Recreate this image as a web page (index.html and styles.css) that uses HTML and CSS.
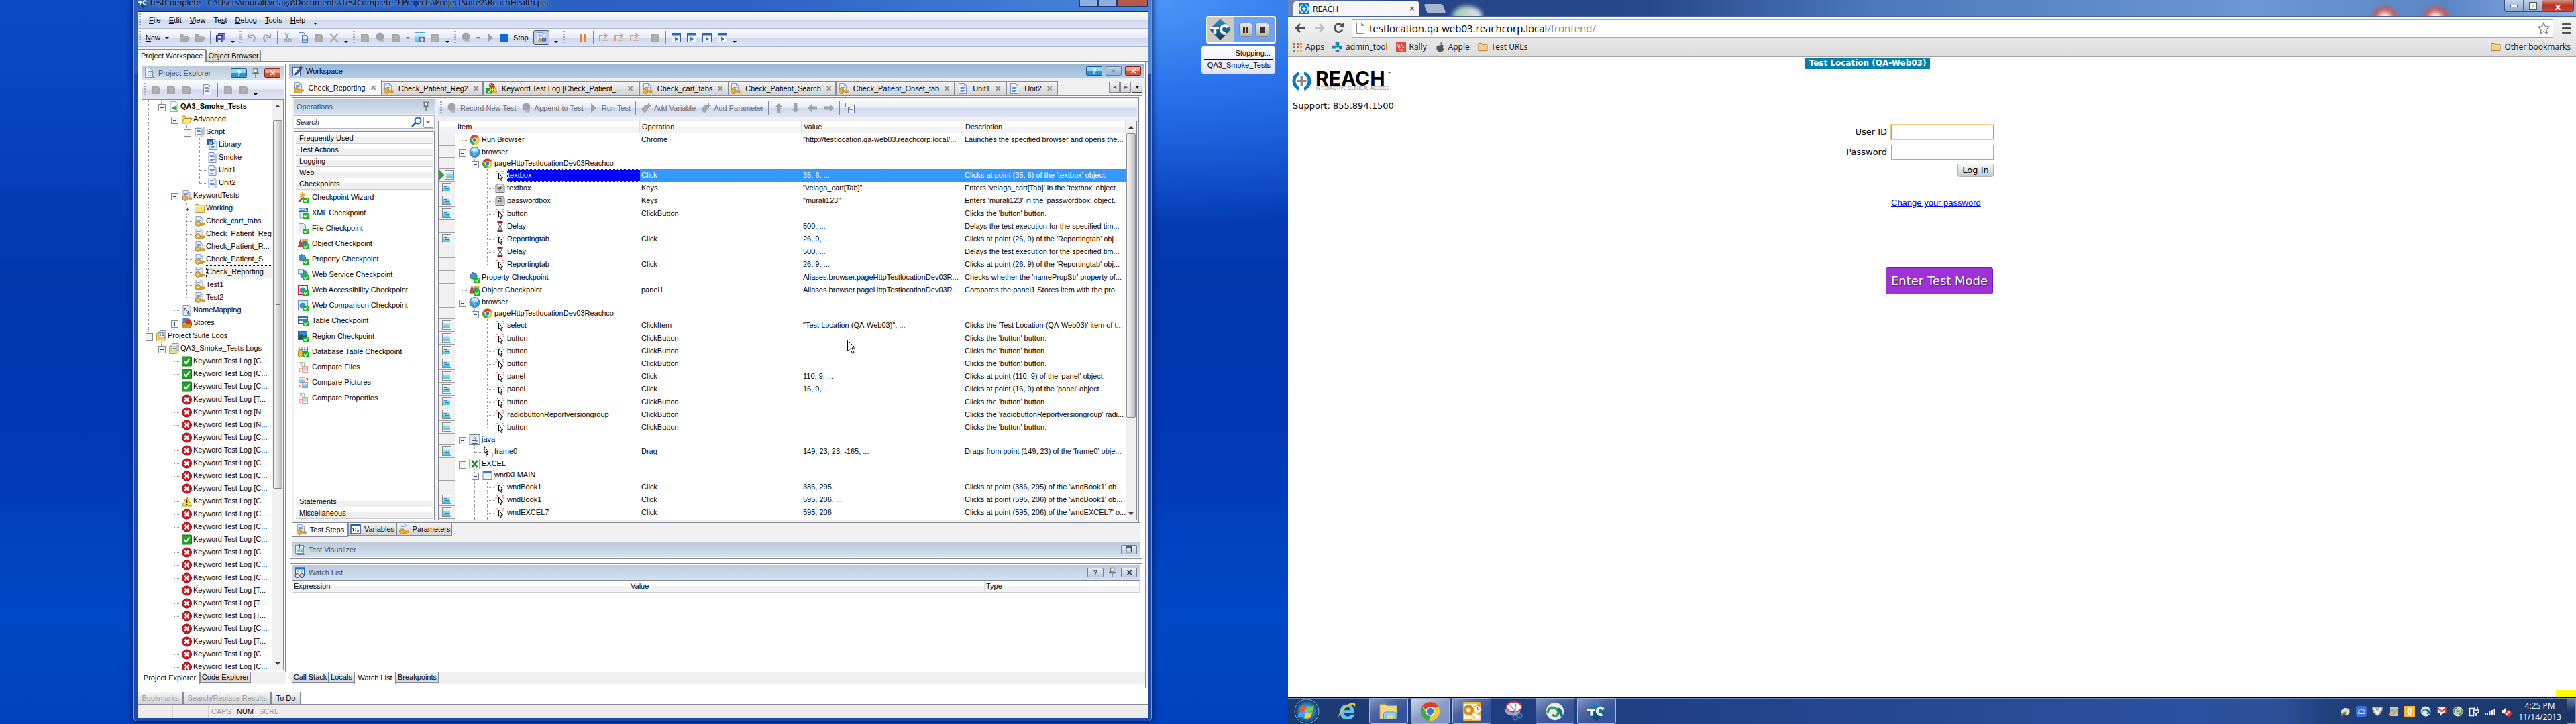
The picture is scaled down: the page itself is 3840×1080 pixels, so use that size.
FILE: index.html
```html
<!DOCTYPE html>
<html lang="en">
<head>
<meta charset="utf-8">
<title>Desktop</title>
<link rel="stylesheet" href="styles.css">
</head>
<body>
<svg class="defs" aria-hidden="true">
<defs>
<linearGradient id="gsky" x1="0" y1="0" x2="0" y2="1"><stop offset="0" stop-color="#fff"/><stop offset=".5" stop-color="#8fd4f4"/><stop offset="1" stop-color="#39c8f5"/></linearGradient>
<linearGradient id="gtc" x1="0" y1="0" x2="0" y2="1"><stop offset="0" stop-color="#2a8fd0"/><stop offset="1" stop-color="#0a3a60"/></linearGradient>
<radialGradient id="gorb"><stop offset="0" stop-color="#5fd0f0"/><stop offset=".7" stop-color="#1b6fae"/><stop offset="1" stop-color="#0d2f5c"/></radialGradient>
</defs>
<symbol id="doc" viewBox="0 0 16 16"><path d="M2.500 .5h8l3 3v12h-11z" fill="#eef3fc" stroke="#8094c4"/><path d="M10 1v3h3" fill="#8fb0e6"/><path d="M4.500 4.500h5M4.500 6.500h7M4.500 8.500h6M4.500 10.500h7M4.500 12.500h5" stroke="#6f8fcf"/></symbol>
<symbol id="lib" viewBox="0 0 16 16"><use href="#doc" x="1"/><rect width="9" height="9" fill="#1a5f9e"/><path d="M2 2l4.500 4.500M6.500 3v4h-4" stroke="#fff" fill="none"/></symbol>
<symbol id="docs" viewBox="0 0 16 16"><path d="M4.500 .5h9l1 1v11h-10z" fill="#dce6f8" stroke="#8094c4"/><path d="M1.500 2.500h9l1 1v12h-10z" fill="#eef3fc" stroke="#8094c4"/><path d="M3.500 5.500h5M3.500 7.500h6M3.500 9.500h5M3.500 11.500h6" stroke="#5f82c8"/></symbol>
<symbol id="key" viewBox="0 0 16 16"><path d="M2.500 .5h7l3 3v11h-10z" fill="#e6eefb" stroke="#8da0cc"/><path d="M9 1v3h3" fill="#7fa8e6"/><path d="M4 4.500h5M4 6.500h6" stroke="#7f9ad0"/><circle cx="5.500" cy="11.500" r="2.800" fill="none" stroke="#a87410" stroke-width="3"/><circle cx="5.500" cy="11.500" r="2.800" fill="none" stroke="#f0b428" stroke-width="1.600"/><path d="M8 11.500h8M12 12v3M14.500 12v2" stroke="#d9981a" stroke-width="2"/></symbol>
<symbol id="proj" viewBox="0 0 16 16"><path d="M2.500 .5h8l3 3v12h-11z" fill="#f5f7fa" stroke="#a0a8b4"/><path d="M12 6v8l-8-4z" fill="#35a04a"/></symbol>
<symbol id="fopen" viewBox="0 0 16 16"><path d="M1 14V3h5l1 1.500h6V7" fill="#f0cf58" stroke="#b9952c"/><path d="M1 14L4 6.500h12L12 14z" fill="#fbe58c" stroke="#b9952c"/></symbol>
<symbol id="fold" viewBox="0 0 16 16"><path d="M1 13.500V2.500h5l1 1.500h8v9.500z" fill="#f6dd7c" stroke="#c4a13a"/><path d="M1.500 5.500h13" stroke="#fff3bf"/></symbol>
<symbol id="logs" viewBox="0 0 16 16"><path d="M5.500 .5h9v10h-9z" fill="#dfe8f6" stroke="#8294b8"/><path d="M3.500 2.500h9v9h-9z" fill="#f4f8fe" stroke="#8294b8"/><path d="M1 4.500v11h11l3.500-4.500h-9l-2 1.500V4.500z" fill="#f9dd80" stroke="#c4a13a"/><path d="M6 5h1.500M6 7.500h1.500" stroke="#4a9a3a"/><path d="M8.500 5h3M8.500 7.500h3" stroke="#577"/></symbol>
<symbol id="nm" viewBox="0 0 16 16"><path d="M2.500 .5h8l3 3v12h-11z" fill="#dfe9fa" stroke="#7f9ad0"/><path d="M4 9l2-5 2 5M5 7.500h2.500M9.500 9.500v4.500h2v-2h-2M11 12v-2.500H9.500" stroke="#333" fill="none"/></symbol>
<symbol id="stores" viewBox="0 0 16 16"><rect x="2" y="1" width="8" height="7" fill="#3a86c8"/><circle cx="10.500" cy="6" r="4" fill="#d6322a"/><path d="M1 7l2 2h9l3-3v6l-3 3.500H1z" fill="#d9941f" stroke="#8a5a10"/></symbol>
<symbol id="ok" viewBox="0 0 16 16"><rect x="1" y="1" width="14" height="14" rx="1" fill="#22a324" stroke="#11791a"/><path d="M4 8l3 3.500L12 4" stroke="#fff" stroke-width="2" fill="none"/></symbol>
<symbol id="err" viewBox="0 0 16 16"><circle cx="8" cy="8" r="7" fill="#cf1820" stroke="#8e0d14"/><path d="M5 5l6 6M11 5l-6 6" stroke="#fff" stroke-width="2.500"/></symbol>
<symbol id="warn" viewBox="0 0 16 16"><path d="M8 1l7.500 14H.5z" fill="#ffe12a" stroke="#b79a00"/><path d="M8 5.500v5M8 12v2" stroke="#222" stroke-width="1.600"/></symbol>
<symbol id="chrome" viewBox="0 0 16 16"><circle cx="8" cy="8" r="7.500" fill="#f7c92b"/><path d="M8 .5a7.500 7.500 0 0 1 6.600 4H8a3.500 3.500 0 0 0-3.200 2L1.500 4.300A7.500 7.500 0 0 1 8 .5z" fill="#dc3b2c"/><path d="M1.500 4.300l3.500 5.200a3.500 3.500 0 0 0 3.500 2L7 15.500A7.500 7.500 0 0 1 1.500 4.300z" fill="#3fa64a"/><circle cx="8" cy="8" r="3.600" fill="#fff"/><circle cx="8" cy="8" r="2.800" fill="#3a7bd0"/></symbol>
<symbol id="globe" viewBox="0 0 16 16"><circle cx="8" cy="8" r="7.500" fill="#3a9ade" stroke="#2a76b0"/><ellipse cx="8" cy="5" rx="5.500" ry="3.500" fill="#c4e8fa"/><path d="M3.500 6.500h9L8 13z" fill="#8accf2"/><path d="M5 6.500l3 4 3-4" stroke="#2a84c8" fill="none"/></symbol>
<symbol id="click" viewBox="0 0 16 16"><path d="M3 5H1M5 3L3 1M8 3V0M11 3l2-2M12 5h2" stroke="#f02020" fill="none"/><path d="M6 4v9l2-1.500L9.500 15.500l1.500-1L9.500 11H12z" fill="#fff" stroke="#000"/></symbol>
<symbol id="ak" viewBox="0 0 16 16"><path d="M1.500 11V4q0-2.500 2.500-2.500h8q2.500 0 2.500 2.500v10.500h-13z" fill="#d4d4d4" stroke="#777"/><rect x="3.500" y="2" width="9" height="9" rx="1" fill="#f6f6f6" stroke="#999"/><path d="M6 4.500h3.500V9H6V6.700h3.500" stroke="#333" fill="none"/></symbol>
<symbol id="glass" viewBox="0 0 16 16"><path d="M4 1.500h8M4 14.500h8" stroke="#9c1414" stroke-width="3"/><path d="M5 3h6l-2.300 5L11 13H5l2.300-5z" fill="#e6e6e6" stroke="#666"/></symbol>
<symbol id="ck" viewBox="0 0 16 16"><rect x="7" y="8" width="9" height="8" fill="#12bb18"/><path d="M9 11.500l2 2.500 3.500-4" stroke="#fff" stroke-width="1.500" fill="none"/></symbol>
<symbol id="pchk" viewBox="0 0 16 16"><path d="M1 4l4-3.500 5 1.500 2 4-4 4.500-5-1z" fill="#3d92cf" stroke="#22689c"/><use href="#ck"/></symbol>
<symbol id="ochk" viewBox="0 0 16 16"><path d="M.5 12L4 1.500l3 10.500z" fill="#d84a48" stroke="#a02c2c"/><rect x="6" y="1" width="9" height="7" fill="#e9b02c"/><circle cx="10" cy="8" r="4.500" fill="#2d7fd0"/><use href="#ck"/></symbol>
<symbol id="wiz" viewBox="0 0 16 16"><path d="M1 15L7 8" stroke="#b03a20" stroke-width="2.500"/><path d="M7 0l1 3 3 .5-2.500 1.500L9 8 6.500 6 4 7l1-3-3-1.500 3.500 0zM2 5l2 2M12 2l2 0M12 6l3-1" fill="#f3b21f" stroke="#e09a10"/><use href="#ck"/></symbol>
<symbol id="xmlc" viewBox="0 0 16 16"><rect x="3" y="2" width="10" height="13" fill="#e8f0fa" stroke="#88a4cc"/><rect x="1" y="0" width="14" height="6" fill="#1c6fb4"/><path d="M2 1.500l2 3M4 1.500l-2 3M6 4.500v-3l1.500 2 1.500-2v3M11 1v3.500h2" stroke="#fff" fill="none"/><use href="#ck"/></symbol>
<symbol id="filec" viewBox="0 0 16 16"><path d="M1.500 .5h7l3 3v11h-10z" fill="#dfeaf8" stroke="#7a9cce"/><use href="#ck"/></symbol>
<symbol id="wsc" viewBox="0 0 16 16"><circle cx="9" cy="7" r="6" fill="#3a94d8"/><path d="M8 2q4 3 1 8" stroke="#3aa84a" stroke-width="3" fill="none"/><rect x="0" y="0" width="8" height="6" fill="#dcebfa" stroke="#2566a8"/><use href="#ck"/></symbol>
<symbol id="wac" viewBox="0 0 16 16"><rect x="1" y="1" width="13" height="13" fill="#fff" stroke="#e01818" stroke-width="2"/><circle cx="7" cy="8" r="4.500" fill="#3a94d8"/><path d="M6 5q4 1 1 6" stroke="#3aa84a" stroke-width="2" fill="none"/><use href="#ck"/></symbol>
<symbol id="wcc" viewBox="0 0 16 16"><rect x=".5" y=".5" width="14" height="14" fill="#e6f0fc" stroke="#6a94cc"/><circle cx="7" cy="8" r="4.500" fill="#3a94d8"/><path d="M6 5q4 1 1 6" stroke="#3aa84a" stroke-width="2" fill="none"/><use href="#ck"/></symbol>
<symbol id="tabc" viewBox="0 0 16 16"><rect x=".5" y=".5" width="14" height="11" fill="#fff" stroke="#2c5fae"/><path d="M1 2h14" stroke="#2c6fca" stroke-width="2"/><path d="M2 5.500h12M2 7.500h12M2 9.500h6" stroke="#4a78c0" stroke-dasharray="2 1"/><use href="#ck"/></symbol>
<symbol id="regc" viewBox="0 0 16 16"><rect x=".5" y=".5" width="13" height="12" fill="#3a86d0" stroke="#2b5f94"/><path d="M1 6l4-2 4 3 5-2v7H1z" fill="#1f5a3a"/><use href="#ck"/></symbol>
<symbol id="dbc" viewBox="0 0 16 16"><path d="M2 .5h12.500v11H2zM2 4h12M6 1v10M10 1v10M2 7.500h12" fill="#fff" stroke="#3a78b8"/><path d="M.5 6v8q3 2 6 0V6q-3-2-6 0z" fill="#f0c43a" stroke="#b08818"/><use href="#ck"/></symbol>
<symbol id="cmp" viewBox="0 0 16 16"><rect x="1.500" y=".5" width="8" height="9" fill="#fff" stroke="#4a9a3a" stroke-dasharray="1 1"/><rect x="6.500" y="6.500" width="8" height="9" fill="#fff" stroke="#e03030" stroke-dasharray="1 1"/><path d="M3 3h5M3 5h5M8 9h5M8 11h5M8 13h4" stroke="#aaa"/><path d="M11 1.500h2.500v3" stroke="#2a7a2a" fill="none"/><path d="M4.500 14H2v-3" stroke="#e03030" fill="none"/></symbol>
<symbol id="cmpp" viewBox="0 0 16 16"><rect x="1.500" y=".5" width="9" height="8" fill="url(#gsky)" stroke="#4a9a3a" stroke-dasharray="1 1"/><rect x="6.500" y="7.500" width="8" height="8" fill="url(#gsky)" stroke="#e03030" stroke-dasharray="1 1"/><path d="M12 1.500h2.500v3M4.500 14H2v-3" stroke="#e03030" fill="none"/></symbol>
<symbol id="java" viewBox="0 0 16 16"><rect x=".5" y=".5" width="15" height="15" fill="#dfe8f2" stroke="#6f8296"/><path d="M8 2q-3 3 0 5M10 3.500q-3 2-1 4" stroke="#e07018" fill="none"/><path d="M4.500 9.500h6M5 11.500h5M4 13.500h8M11 9q2 1-1 2.500" stroke="#3a668c" fill="none"/></symbol>
<symbol id="drag" viewBox="0 0 16 16"><rect x="6.500" y="9.500" width="9" height="6" fill="#fff" stroke="#666"/><path d="M3.500 .5v9l2-1.500L7 12l1.500-1L7 7.500h2.500z" fill="#fff" stroke="#000"/></symbol>
<symbol id="xl" viewBox="0 0 16 16"><rect x=".5" y=".5" width="15" height="15" rx="1" fill="#eaf5ea" stroke="#2c8a3c" /><path d="M4 3l8 10M12 3L4 13" stroke="#1f7a32" stroke-width="2.600"/></symbol>
<symbol id="win" viewBox="0 0 16 16"><rect x="1.500" y="1.500" width="13" height="13" fill="#eef3fb" stroke="#7488b0"/><path d="M2 3h12" stroke="#3a6fd8" stroke-width="3"/></symbol>
<symbol id="wplay" viewBox="0 0 16 16"><rect x="1.500" y="1.500" width="13" height="13" fill="#eef3fb" stroke="#3a5a98"/><path d="M2 3h12" stroke="#2a64d0" stroke-width="3"/><path d="M6 6.500l5 3.500-5 3.500z" fill="#2a78c8"/></symbol>
<symbol id="step" viewBox="0 0 16 16"><path d="M2 13V5h9M9 1.500L13 5 9 8.500" stroke="#e0a080" stroke-width="2" fill="none"/><path d="M6 12h8" stroke="#b8b8b8" stroke-width="2"/></symbol>
<symbol id="pause" viewBox="0 0 16 16"><path d="M5 2v12M11 2v12" stroke="#f08028" stroke-width="3.500"/></symbol>
<symbol id="pic" viewBox="0 0 16 16"><rect x="1.500" y="1.500" width="13" height="13" fill="#fff" stroke="#8a8a8a"/><rect x="3" y="3" width="10" height="10" fill="url(#gsky)"/><path d="M4 6.500h5M6 9.500h6" stroke="#1f7fb8"/></symbol>
<symbol id="run" viewBox="0 0 8 16"><path d="M.5 1l7 7-7 7z" fill="#2ca52c" stroke="#167016"/></symbol>
<symbol id="mag" viewBox="0 0 16 16"><circle cx="10" cy="6" r="4.500" fill="#fff" stroke="#1660c8" stroke-width="2"/><path d="M6.500 9.500L1 15" stroke="#1660c8" stroke-width="2.500"/></symbol>
<symbol id="pin" viewBox="0 0 16 16"><path d="M4 1.500h8M5.500 2v5h5V2M3 8.500h10M8 9v6" stroke="#777" stroke-width="1.500" fill="#fff"/></symbol>
<symbol id="wkb" viewBox="0 0 16 16"><rect x="1.500" y="2.500" width="11" height="13" fill="#eef3fc" stroke="#4a5f98"/><path d="M5 12L13 2l2.500 1.500L7.500 13 4.500 14z" fill="#3a5ac0" stroke="#22387c"/><path d="M12.500 1l3 2" stroke="#d03020" stroke-width="2"/></symbol>
<symbol id="pex" viewBox="0 0 16 16"><path d="M1.500 .5h7l4 4v10h-11z" fill="#fafafa" stroke="#999"/><circle cx="9" cy="9" r="4" fill="#cfe9fa" stroke="#4a94cc"/><path d="M12 12l3 3.500" stroke="#c08830" stroke-width="2"/></symbol>
<symbol id="klog" viewBox="0 0 16 16"><path d="M10.500 2L16 13H6z" fill="#ffe12a" stroke="#a08400"/><path d="M10.800 5v4M10.800 10v2" stroke="#222"/><circle cx="7.500" cy="3.500" r="3.500" fill="#d8202a"/><path d="M6 2l3 3M9 2L6 5" stroke="#fff"/><rect x="0" y="7" width="8.500" height="8.500" rx="1" fill="#22a324"/><path d="M2 11l2 2 3-4" stroke="#fff" stroke-width="1.500" fill="none"/></symbol>
<symbol id="var" viewBox="0 0 16 16"><rect x="1" y="1" width="14" height="14" fill="#fff" stroke="#1a50b8" stroke-width="1.500"/><path d="M1 2h14" stroke="#1a60d8" stroke-width="3"/><path d="M3 6l1.500 2.500L6 6M4.500 8v3M8 7v1M8 10v1M10 7l1.500-1v5M10 11h3" stroke="#111" fill="none"/></symbol>
<symbol id="watch" viewBox="0 0 16 16"><rect x="1.500" y="1" width="13" height="11" fill="#fff" stroke="#1a60c8"/><path d="M1 2h14" stroke="#1a70e0" stroke-width="3"/><path d="M4 6h3M9 6h3" stroke="#4a78c0"/><circle cx="4" cy="12.500" r="3" fill="#dde" stroke="#333"/><circle cx="11" cy="12.500" r="3" fill="#dde" stroke="#333"/></symbol>
<symbol id="vis" viewBox="0 0 16 16"><rect x="3.500" y="3.500" width="12" height="12" fill="#ddd" stroke="#888"/><rect x="1.500" y="1.500" width="12" height="12" fill="#fff" stroke="#888"/><rect x="3" y="3" width="9" height="9" fill="url(#gsky)"/><path d="M7.500 0v5" stroke="#555"/></symbol>
<symbol id="gdoc" viewBox="0 0 16 16"><path d="M2 2h9l3 3v9H2z" fill="#a8a8a8"/><path d="M5 6h6M5 9h6M5 12h4" stroke="#c8c8c8"/></symbol>
<symbol id="gfold" viewBox="0 0 16 16"><path d="M1 14V3h5l1 2h6v2h3l-3 7z" fill="#a8a8a8"/><path d="M4 8h9" stroke="#ccc"/></symbol>
<symbol id="gdisk" viewBox="0 0 16 16"><path d="M4.500 1.500h10v10h-10z" fill="#7a7fd0" stroke="#33379a"/><path d="M1.500 4.500h10v10h-10z" fill="#5258c0" stroke="#2a2f90"/><path d="M4 5h5v4H4z" fill="#eef"/><path d="M4 11h5v3H4z" fill="#dde"/></symbol>
<symbol id="undo" viewBox="0 0 16 16"><path d="M3 2v6h6M3.500 7.500q5-5 8-2t-1 9" stroke="#a6a6a6" stroke-width="2.200" fill="none"/></symbol>
<symbol id="redo" viewBox="0 0 16 16"><path d="M13 2v6H7M12.500 7.500q-5-5-8-2t1 9" stroke="#a6a6a6" stroke-width="2.200" fill="none"/></symbol>
<symbol id="cut" viewBox="0 0 16 16"><path d="M4 1l5 9M9 1L6 9" stroke="#a6a6a6" stroke-width="2"/><circle cx="5" cy="12" r="2" fill="none" stroke="#a6a6a6" stroke-width="1.500"/><circle cx="11" cy="12" r="2" fill="none" stroke="#a6a6a6" stroke-width="1.500"/></symbol>
<symbol id="copy" viewBox="0 0 16 16"><path d="M1.500 .5h7l2 2v9h-9z" fill="#eaf1fd" stroke="#5a80cc"/><path d="M6.500 4.500h6l2 2v9h-8z" fill="#dfeafc" stroke="#4a74c8"/><path d="M8 8.500h5M8 10.500h5M8 12.500h5" stroke="#7a9cdc"/></symbol>
<symbol id="xx" viewBox="0 0 16 16"><path d="M2 2l12 13M14 2L2 15" stroke="#a6a6a6" stroke-width="2"/></symbol>
<symbol id="grec" viewBox="0 0 16 16"><circle cx="7.500" cy="6.500" r="6" fill="#a2a2a2"/><path d="M5 12h8M11 12v3M8 12v3" stroke="#b5b5b5" stroke-width="2.500"/></symbol>
<symbol id="gtag" viewBox="0 0 16 16"><path d="M1 10l5-6 6 0-1 6-5 6z" fill="#a8a8a8"/><path d="M12 1v7M8.500 4.500h7" stroke="#9a9a9a" stroke-width="2"/></symbol>
<symbol id="gplay" viewBox="0 0 16 16"><path d="M4 1l8 7-8 7z" fill="#a2a2a2"/></symbol>
<symbol id="ar" viewBox="0 0 16 16"><path d="M8 1l6 6h-3.500v8h-5V7H2z" fill="#a2a2a2"/></symbol>
<symbol id="cam" viewBox="0 0 16 16"><rect x=".5" y=".5" width="15" height="14" fill="url(#gsky)" stroke="#5aa0c8"/><rect x="6" y="7" width="10" height="8" fill="#777"/><circle cx="11" cy="11" r="2.500" fill="#ddd"/></symbol>
<symbol id="note" viewBox="0 0 16 16"><path d="M5.500 3.500h9v12h-9z" fill="#eef3fc" stroke="#5a78b8"/><path d="M7 10.500h6M7 12.500h6" stroke="#6f8fcf"/><path d="M1.500 .5h11v6h-4L6 10V6.500H1.500z" fill="#fbf6dc" stroke="#8c8460"/></symbol>
<symbol id="gears" viewBox="0 0 16 16"><path d="M1.500 .5h9l3 3v11h-12z" fill="#e6eefb" stroke="#7a92c8"/><path d="M3 4h7M3 6h7" stroke="#7f9ad0"/><circle cx="6" cy="12" r="2.500" fill="#e8b030" stroke="#a87810"/><circle cx="12" cy="11" r="3" fill="#4a88d8" stroke="#2a5aa0"/></symbol>
<symbol id="tc" viewBox="0 0 32 32"><path d="M16 0l16 15.500L16 32 0 16z" fill="url(#gtc)"/><path d="M0 14h14" stroke="#fff" stroke-width="4"/><path d="M8 14v9" stroke="#fff" stroke-width="4.500"/><path d="M27 13q-3-4-7-2-5 3-2 8 3 4 7 2" stroke="#fff" stroke-width="4" fill="none"/></symbol>
<symbol id="reach" viewBox="0 0 30 30"><path d="M11 1Q1 5 1 15t10 14l1-4Q6 21 6 15t6-10zM19 1q10 4 10 14T19 29l-1-4q6-4 6-10T18 5z" fill="#0a7cc4"/><path d="M15 8v14M8 15h14" stroke="#8a8a8e" stroke-width="4"/></symbol>
<symbol id="ypf" viewBox="0 0 16 16"><path d="M1 13.500V2.500q0-1 1-1h4l1 2h7q1 0 1 1v9z" fill="#f7cf80" stroke="#a9793a"/><path d="M2 5.500h12" stroke="#fdebc0"/></symbol>
</svg>

<div class="screens">
<section class="desk">
<article class="tcwin">
<header class="title"><svg class="i"><use href="#tc"/></svg><span>TestComplete - C:\Users\murali.velaga\Documents\TestComplete 9 Projects\ProjectSuite2\ReachHealth.pjs</span>
<span class="caps"><button aria-label="Minimize"></button><button aria-label="Maximize"></button><button class="red" aria-label="Close"></button></span></header>
<div class="client">
<nav class="bar menu"><i class="grip"></i><button><u>F</u>ile</button><button><u>E</u>dit</button><button><u>V</u>iew</button><button>Te<u>s</u>t</button><button><u>D</u>ebug</button><button><u>T</u>ools</button><button><u>H</u>elp</button><i class="dd low"></i></nav>
<div class="bar tools">
<i class="grip"></i><button><u>N</u>ew</button><i class="dd"></i><i class="sep"></i>
<svg class="i"><use href="#gfold"/></svg><svg class="i"><use href="#gfold"/></svg><i class="sep"></i><svg class="i"><use href="#gdisk"/></svg><i class="dd low"></i>
<i class="grip"></i><svg class="i"><use href="#undo"/></svg><svg class="i"><use href="#redo"/></svg><i class="sep"></i><svg class="i"><use href="#cut"/></svg><svg class="i"><use href="#copy"/></svg><svg class="i"><use href="#gdoc"/></svg><svg class="i"><use href="#xx"/></svg><i class="dd low"></i>
<i class="grip"></i><svg class="i"><use href="#gdoc"/></svg><svg class="i"><use href="#grec"/></svg><svg class="i"><use href="#gdoc"/></svg><i class="dd gray"></i><svg class="i"><use href="#cam"/></svg><svg class="i"><use href="#gdoc"/></svg><i class="dd low"></i>
<i class="grip"></i><svg class="i"><use href="#grec"/></svg><i class="dd gray"></i><svg class="i"><use href="#gplay"/></svg><i class="stop"></i><button>Stop</button><button class="pressed" aria-label="Script options"><svg class="i"><use href="#gears"/></svg></button><i class="dd low"></i>
<i class="grip wide"></i><svg class="i"><use href="#pause"/></svg><i class="sep"></i><svg class="i"><use href="#step"/></svg><svg class="i"><use href="#step"/></svg><svg class="i"><use href="#step"/></svg><i class="sep"></i><svg class="i"><use href="#gdoc"/></svg><i class="sep"></i><svg class="i"><use href="#wplay"/></svg><svg class="i"><use href="#wplay"/></svg><svg class="i"><use href="#wplay"/></svg><svg class="i"><use href="#wplay"/></svg><i class="dd low"></i>
</div>
<div class="tabs top"><button class="on w102">Project Workspace</button><button class="w82">Object Browser</button></div>
<div class="work">
<div class="left">
<section class="pane explorer">
<h2 class="cap"><svg class="i"><use href="#pex"/></svg><span>Project Explorer</span><button class="cb blue">?</button><svg class="i"><use href="#pin"/></svg><button class="cb red">✕</button></h2>
<div class="bar ptools"><i class="grip"></i><svg class="i"><use href="#gdoc"/></svg><svg class="i"><use href="#gdoc"/></svg><svg class="i"><use href="#gdoc"/></svg><i class="sep"></i><svg class="i"><use href="#doc"/></svg><i class="sep"></i><svg class="i"><use href="#gdoc"/></svg><svg class="i"><use href="#gdoc"/></svg><i class="dd low"></i></div>
<div class="box scroller">
<ul class="tree">
<li><i class="v"></i><i class="m"></i><svg class="i"><use href="#proj"/></svg><b>QA3_Smoke_Tests</b></li>
<li><i class="v"></i><i></i><i class="m k"></i><svg class="i"><use href="#fopen"/></svg>Advanced</li>
<li><i class="v"></i><i></i><i class="v"></i><i class="m"></i><svg class="i"><use href="#docs"/></svg>Script</li>
<li><i class="v"></i><i></i><i class="v"></i><i></i><i class="t"></i><svg class="i"><use href="#lib"/></svg>Library</li>
<li><i class="v"></i><i></i><i class="v"></i><i></i><i class="t"></i><svg class="i"><use href="#doc"/></svg>Smoke</li>
<li><i class="v"></i><i></i><i class="v"></i><i></i><i class="t"></i><svg class="i"><use href="#doc"/></svg>Unit1</li>
<li><i class="v"></i><i></i><i class="v"></i><i></i><i class="l"></i><svg class="i"><use href="#doc"/></svg>Unit2</li>
<li><i class="v"></i><i></i><i class="m k"></i><svg class="i"><use href="#key"/></svg>KeywordTests</li>
<li><i class="v"></i><i></i><i class="v"></i><i class="m k p"></i><svg class="i"><use href="#fold"/></svg>Working</li>
<li><i class="v"></i><i></i><i class="v"></i><i class="t"></i><svg class="i"><use href="#key"/></svg>Check_cart_tabs</li>
<li><i class="v"></i><i></i><i class="v"></i><i class="t"></i><svg class="i"><use href="#key"/></svg>Check_Patient_Reg</li>
<li><i class="v"></i><i></i><i class="v"></i><i class="t"></i><svg class="i"><use href="#key"/></svg>Check_Patient_R...</li>
<li><i class="v"></i><i></i><i class="v"></i><i class="t"></i><svg class="i"><use href="#key"/></svg>Check_Patient_S...</li>
<li><i class="v"></i><i></i><i class="v"></i><i class="t"></i><svg class="i"><use href="#key"/></svg><span class="cur">Check_Reporting</span></li>
<li><i class="v"></i><i></i><i class="v"></i><i class="t"></i><svg class="i"><use href="#key"/></svg>Test1</li>
<li><i class="v"></i><i></i><i class="v"></i><i class="l"></i><svg class="i"><use href="#key"/></svg>Test2</li>
<li><i class="v"></i><i></i><i class="t"></i><svg class="i"><use href="#nm"/></svg>NameMapping</li>
<li><i class="v"></i><i></i><i class="m p"></i><svg class="i"><use href="#stores"/></svg>Stores</li>
<li><i class="m"></i><svg class="i"><use href="#logs"/></svg>Project Suite Logs</li>
<li><i></i><i class="m"></i><svg class="i"><use href="#logs"/></svg>QA3_Smoke_Tests Logs</li>
<li><i></i><i></i><i class="t"></i><svg class="i"><use href="#ok"/></svg>Keyword Test Log [C...</li>
<li><i></i><i></i><i class="t"></i><svg class="i"><use href="#ok"/></svg>Keyword Test Log [C...</li>
<li><i></i><i></i><i class="t"></i><svg class="i"><use href="#ok"/></svg>Keyword Test Log [C...</li>
<li><i></i><i></i><i class="t"></i><svg class="i"><use href="#err"/></svg>Keyword Test Log [T...</li>
<li><i></i><i></i><i class="t"></i><svg class="i"><use href="#err"/></svg>Keyword Test Log [N...</li>
<li><i></i><i></i><i class="t"></i><svg class="i"><use href="#err"/></svg>Keyword Test Log [N...</li>
<li><i></i><i></i><i class="t"></i><svg class="i"><use href="#err"/></svg>Keyword Test Log [C...</li>
<li><i></i><i></i><i class="t"></i><svg class="i"><use href="#err"/></svg>Keyword Test Log [C...</li>
<li><i></i><i></i><i class="t"></i><svg class="i"><use href="#err"/></svg>Keyword Test Log [C...</li>
<li><i></i><i></i><i class="t"></i><svg class="i"><use href="#err"/></svg>Keyword Test Log [C...</li>
<li><i></i><i></i><i class="t"></i><svg class="i"><use href="#err"/></svg>Keyword Test Log [C...</li>
<li><i></i><i></i><i class="t"></i><svg class="i"><use href="#warn"/></svg>Keyword Test Log [C...</li>
<li><i></i><i></i><i class="t"></i><svg class="i"><use href="#err"/></svg>Keyword Test Log [C...</li>
<li><i></i><i></i><i class="t"></i><svg class="i"><use href="#err"/></svg>Keyword Test Log [C...</li>
<li><i></i><i></i><i class="t"></i><svg class="i"><use href="#ok"/></svg>Keyword Test Log [C...</li>
<li><i></i><i></i><i class="t"></i><svg class="i"><use href="#err"/></svg>Keyword Test Log [C...</li>
<li><i></i><i></i><i class="t"></i><svg class="i"><use href="#err"/></svg>Keyword Test Log [C...</li>
<li><i></i><i></i><i class="t"></i><svg class="i"><use href="#err"/></svg>Keyword Test Log [C...</li>
<li><i></i><i></i><i class="t"></i><svg class="i"><use href="#err"/></svg>Keyword Test Log [T...</li>
<li><i></i><i></i><i class="t"></i><svg class="i"><use href="#err"/></svg>Keyword Test Log [T...</li>
<li><i></i><i></i><i class="t"></i><svg class="i"><use href="#err"/></svg>Keyword Test Log [T...</li>
<li><i></i><i></i><i class="t"></i><svg class="i"><use href="#err"/></svg>Keyword Test Log [C...</li>
<li><i></i><i></i><i class="t"></i><svg class="i"><use href="#err"/></svg>Keyword Test Log [T...</li>
<li><i></i><i></i><i class="t"></i><svg class="i"><use href="#err"/></svg>Keyword Test Log [C...</li>
<li><i></i><i></i><i class="t"></i><svg class="i"><use href="#err"/></svg>Keyword Test Log [C...</li>
</ul>
<div class="sb"><i class="up"></i><i class="thumb tall"></i><i class="down"></i></div>
</div>
</section>
<div class="tabs bot"><button class="on w88">Project Explorer</button><button class="w78">Code Explorer</button></div>
</div>

<div class="right">
<h2 class="cap main"><svg class="i"><use href="#wkb"/></svg><span>Workspace</span><button class="cb blue">?</button><button class="cb sky">▫</button><button class="cb red">✕</button></h2>
<div class="tabs docs">
<button class="on w136"><svg class="i"><use href="#key"/></svg><span>Check_Reporting</span><s>✕</s></button>
<button class="w152"><svg class="i"><use href="#key"/></svg><span>Check_Patient_Reg2</span><s>✕</s></button>
<button class="w232"><svg class="i"><use href="#klog"/></svg><span>Keyword Test Log [Check_Patient_...</span><s>✕</s></button>
<button class="w132"><svg class="i"><use href="#key"/></svg><span>Check_cart_tabs</span><s>✕</s></button>
<button class="w160"><svg class="i"><use href="#key"/></svg><span>Check_Patient_Search</span><s>✕</s></button>
<button class="w178"><svg class="i"><use href="#key"/></svg><span>Check_Patient_Onset_tab</span><s>✕</s></button>
<button class="w76"><svg class="i"><use href="#doc"/></svg><span>Unit1</span><s>✕</s></button>
<button class="w76"><svg class="i"><use href="#doc"/></svg><span>Unit2</span><s>✕</s></button>
<span class="nav"><button aria-label="Previous tab">◂</button><button aria-label="Next tab">▸</button><button class="last" aria-label="Tab list">▾</button></span>
</div>
<section class="docbox">
<div class="editor">
<aside class="ops">
<h3 class="cap"><span>Operations</span><svg class="i"><use href="#pin"/></svg></h3>
<label class="search"><input type="text" placeholder="Search" aria-label="Search operations"><svg class="i"><use href="#mag"/></svg><button aria-label="Search options"><i class="dd gray"></i></button></label>
<div class="box oplist">
<button class="cat">Frequently Used</button><button class="cat">Test Actions</button><button class="cat">Logging</button><button class="cat">Web</button><button class="cat">Checkpoints</button>
<ul>
<li><svg class="i"><use href="#wiz"/></svg>Checkpoint Wizard</li>
<li><svg class="i"><use href="#xmlc"/></svg>XML Checkpoint</li>
<li><svg class="i"><use href="#filec"/></svg>File Checkpoint</li>
<li><svg class="i"><use href="#ochk"/></svg>Object Checkpoint</li>
<li><svg class="i"><use href="#pchk"/></svg>Property Checkpoint</li>
<li><svg class="i"><use href="#wsc"/></svg>Web Service Checkpoint</li>
<li><svg class="i"><use href="#wac"/></svg>Web Accessibility Checkpoint</li>
<li><svg class="i"><use href="#wcc"/></svg>Web Comparison Checkpoint</li>
<li><svg class="i"><use href="#tabc"/></svg>Table Checkpoint</li>
<li><svg class="i"><use href="#regc"/></svg>Region Checkpoint</li>
<li><svg class="i"><use href="#dbc"/></svg>Database Table Checkpoint</li>
<li><svg class="i"><use href="#cmp"/></svg>Compare Files</li>
<li><svg class="i"><use href="#cmpp"/></svg>Compare Pictures</li>
<li><svg class="i"><use href="#cmp"/></svg>Compare Properties</li>
</ul>
<button class="cat">Statements</button><button class="cat">Miscellaneous</button>
</div>
</aside>
<div class="steps">
<div class="bar stools"><i class="grip"></i>
<button><svg class="i"><use href="#grec"/></svg>Record New Test</button><button><svg class="i"><use href="#grec"/></svg>Append to Test</button><button><svg class="i"><use href="#gplay"/></svg>Run Test</button><i class="sep"></i><button><svg class="i"><use href="#gtag"/></svg>Add Variable</button><button><svg class="i"><use href="#gtag"/></svg>Add Parameter</button><i class="sep"></i>
<svg class="i"><use href="#ar"/></svg><svg class="i r180"><use href="#ar"/></svg><svg class="i r270"><use href="#ar"/></svg><svg class="i r90"><use href="#ar"/></svg><i class="sep"></i><svg class="i"><use href="#note"/></svg></div>
<div class="box scroller">
<div class="clip">
<table class="grid">
<colgroup><col class="c0"><col class="c1"><col class="c2"><col class="c2"><col></colgroup>
<thead><tr><th></th><th>Item</th><th>Operation</th><th>Value</th><th>Description</th></tr></thead>
<tbody>
<tr><td></td><td><div><i class="t f"></i><svg class="i"><use href="#chrome"/></svg>Run Browser</div></td><td>Chrome</td><td>"http://testlocation.qa-web03.reachcorp.local/...</td><td>Launches the specified browser and opens the...</td></tr>
<tr class="s"><td></td><td><div><i class="m k"></i><svg class="i"><use href="#globe"/></svg>browser</div></td><td></td><td></td><td></td></tr>
<tr class="s"><td></td><td><div><i class="v"></i><i class="m"></i><svg class="i"><use href="#chrome"/></svg>pageHttpTestlocationDev03Reachco</div></td><td></td><td></td><td></td></tr>
<tr class="sel"><td><svg class="arrow"><use href="#run"/></svg><svg class="i"><use href="#pic"/></svg></td><td><div><i class="v"></i><i></i><i class="t"></i><svg class="i"><use href="#click"/></svg><span>textbox</span></div></td><td>Click</td><td>35, 6, ...</td><td>Clicks at point (35, 6) of the 'textbox' object.</td></tr>
<tr><td><svg class="i"><use href="#pic"/></svg></td><td><div><i class="v"></i><i></i><i class="t"></i><svg class="i"><use href="#ak"/></svg>textbox</div></td><td>Keys</td><td>"velaga_cart[Tab]"</td><td>Enters 'velaga_cart[Tab]' in the 'textbox' object.</td></tr>
<tr><td><svg class="i"><use href="#pic"/></svg></td><td><div><i class="v"></i><i></i><i class="t"></i><svg class="i"><use href="#ak"/></svg>passwordbox</div></td><td>Keys</td><td>"murali123"</td><td>Enters 'murali123' in the 'passwordbox' object.</td></tr>
<tr><td><svg class="i"><use href="#pic"/></svg></td><td><div><i class="v"></i><i></i><i class="t"></i><svg class="i"><use href="#click"/></svg>button</div></td><td>ClickButton</td><td></td><td>Clicks the 'button' button.</td></tr>
<tr><td></td><td><div><i class="v"></i><i></i><i class="t"></i><svg class="i"><use href="#glass"/></svg>Delay</div></td><td></td><td>500, ...</td><td>Delays the test execution for the specified tim...</td></tr>
<tr><td><svg class="i"><use href="#pic"/></svg></td><td><div><i class="v"></i><i></i><i class="t"></i><svg class="i"><use href="#click"/></svg>Reportingtab</div></td><td>Click</td><td>26, 9, ...</td><td>Clicks at point (26, 9) of the 'Reportingtab' obj...</td></tr>
<tr><td></td><td><div><i class="v"></i><i></i><i class="t"></i><svg class="i"><use href="#glass"/></svg>Delay</div></td><td></td><td>500, ...</td><td>Delays the test execution for the specified tim...</td></tr>
<tr><td></td><td><div><i class="v"></i><i></i><i class="l"></i><svg class="i"><use href="#click"/></svg>Reportingtab</div></td><td>Click</td><td>26, 9, ...</td><td>Clicks at point (26, 9) of the 'Reportingtab' obj...</td></tr>
<tr><td></td><td><div><i class="t"></i><svg class="i"><use href="#pchk"/></svg>Property Checkpoint</div></td><td></td><td>Aliases.browser.pageHttpTestlocationDev03R...</td><td>Checks whether the 'namePropStr' property of...</td></tr>
<tr><td></td><td><div><i class="t"></i><svg class="i"><use href="#ochk"/></svg>Object Checkpoint</div></td><td>panel1</td><td>Aliases.browser.pageHttpTestlocationDev03R...</td><td>Compares the panel1 Stores item with the pro...</td></tr>
<tr class="s"><td></td><td><div><i class="m k"></i><svg class="i"><use href="#globe"/></svg>browser</div></td><td></td><td></td><td></td></tr>
<tr class="s"><td></td><td><div><i class="v"></i><i class="m"></i><svg class="i"><use href="#chrome"/></svg>pageHttpTestlocationDev03Reachco</div></td><td></td><td></td><td></td></tr>
<tr><td><svg class="i"><use href="#pic"/></svg></td><td><div><i class="v"></i><i></i><i class="t"></i><svg class="i"><use href="#click"/></svg>select</div></td><td>ClickItem</td><td>"Test Location (QA-Web03)", ...</td><td>Clicks the 'Test Location (QA-Web03)' item of t...</td></tr>
<tr><td><svg class="i"><use href="#pic"/></svg></td><td><div><i class="v"></i><i></i><i class="t"></i><svg class="i"><use href="#click"/></svg>button</div></td><td>ClickButton</td><td></td><td>Clicks the 'button' button.</td></tr>
<tr><td><svg class="i"><use href="#pic"/></svg></td><td><div><i class="v"></i><i></i><i class="t"></i><svg class="i"><use href="#click"/></svg>button</div></td><td>ClickButton</td><td></td><td>Clicks the 'button' button.</td></tr>
<tr><td><svg class="i"><use href="#pic"/></svg></td><td><div><i class="v"></i><i></i><i class="t"></i><svg class="i"><use href="#click"/></svg>button</div></td><td>ClickButton</td><td></td><td>Clicks the 'button' button.</td></tr>
<tr><td><svg class="i"><use href="#pic"/></svg></td><td><div><i class="v"></i><i></i><i class="t"></i><svg class="i"><use href="#click"/></svg>panel</div></td><td>Click</td><td>110, 9, ...</td><td>Clicks at point (110, 9) of the 'panel' object.</td></tr>
<tr><td><svg class="i"><use href="#pic"/></svg></td><td><div><i class="v"></i><i></i><i class="t"></i><svg class="i"><use href="#click"/></svg>panel</div></td><td>Click</td><td>16, 9, ...</td><td>Clicks at point (16, 9) of the 'panel' object.</td></tr>
<tr><td><svg class="i"><use href="#pic"/></svg></td><td><div><i class="v"></i><i></i><i class="t"></i><svg class="i"><use href="#click"/></svg>button</div></td><td>ClickButton</td><td></td><td>Clicks the 'button' button.</td></tr>
<tr><td><svg class="i"><use href="#pic"/></svg></td><td><div><i class="v"></i><i></i><i class="t"></i><svg class="i"><use href="#click"/></svg>radiobuttonReportversiongroup</div></td><td>ClickButton</td><td></td><td>Clicks the 'radiobuttonReportversiongroup' radi...</td></tr>
<tr><td><svg class="i"><use href="#pic"/></svg></td><td><div><i class="v"></i><i></i><i class="l"></i><svg class="i"><use href="#click"/></svg>button</div></td><td>ClickButton</td><td></td><td>Clicks the 'button' button.</td></tr>
<tr class="s"><td></td><td><div><i class="m k"></i><svg class="i"><use href="#java"/></svg>java</div></td><td></td><td></td><td></td></tr>
<tr><td><svg class="i"><use href="#pic"/></svg></td><td><div><i class="v"></i><i class="l"></i><svg class="i"><use href="#drag"/></svg>frame0</div></td><td>Drag</td><td>149, 23, 23, -165, ...</td><td>Drags from point (149, 23) of the 'frame0' obje...</td></tr>
<tr class="s"><td></td><td><div><i class="m k"></i><svg class="i"><use href="#xl"/></svg>EXCEL</div></td><td></td><td></td><td></td></tr>
<tr class="s"><td></td><td><div><i class="v"></i><i class="m k"></i><svg class="i"><use href="#win"/></svg>wndXLMAIN</div></td><td></td><td></td><td></td></tr>
<tr><td></td><td><div><i class="v"></i><i class="v"></i><i class="t"></i><svg class="i"><use href="#click"/></svg>wndBook1</div></td><td>Click</td><td>386, 295, ...</td><td>Clicks at point (386, 295) of the 'wndBook1' ob...</td></tr>
<tr><td><svg class="i"><use href="#pic"/></svg></td><td><div><i class="v"></i><i class="v"></i><i class="t"></i><svg class="i"><use href="#click"/></svg>wndBook1</div></td><td>Click</td><td>595, 206, ...</td><td>Clicks at point (595, 206) of the 'wndBook1' ob...</td></tr>
<tr><td><svg class="i"><use href="#pic"/></svg></td><td><div><i class="v"></i><i class="v"></i><i class="t"></i><svg class="i"><use href="#click"/></svg>wndEXCEL7</div></td><td>Click</td><td>595, 206</td><td>Clicks at point (595, 206) of the 'wndEXCEL7' o...</td></tr>
<tr><td><svg class="i"><use href="#pic"/></svg></td><td><div><i class="v"></i><i class="v"></i><i class="t"></i><svg class="i"><use href="#click"/></svg></div></td><td></td><td></td><td></td></tr>
</tbody>
</table>
</div>
<div class="sb"><i class="up"></i><i class="thumb mid"></i><i class="down"></i></div>
</div>
</div>
</div>
<div class="tabs bot in"><button class="on w84"><svg class="i"><use href="#key"/></svg>Test Steps</button><button class="w72"><svg class="i"><use href="#var"/></svg>Variables</button><button class="w83"><svg class="i"><use href="#key"/></svg>Parameters</button></div>
<h3 class="cap vis"><svg class="i"><use href="#vis"/></svg><span>Test Visualizer</span><button class="cb">❐</button></h3>
</section>
<section class="pane watch">
<h3 class="cap"><svg class="i"><use href="#watch"/></svg><span>Watch List</span><button class="cb">?</button><svg class="i"><use href="#pin"/></svg><button class="cb">✕</button></h3>
<div class="box"><table class="wt"><thead><tr><th>Expression</th><th>Value</th><th>Type</th></tr></thead></table></div>
</section>
<div class="tabs bot"><button class="w55 first">Call Stack</button><button class="w38">Locals</button><button class="on w61">Watch List</button><button class="w64">Breakpoints</button></div>
</div>
</div>
<div class="tabs foot"><button class="off w68" disabled>Bookmarks</button><button class="off w130" disabled>Search/Replace Results</button><button class="w42">To Do</button></div>
<footer class="status"><span class="w53"></span><span class="w53"></span><span class="keys"><span>CAPS</span><b>NUM</b><span>SCRL</span></span><span class="w33"></span></footer>
</div>
<svg class="pointer" viewBox="0 0 13 21"><path d="M.5 .5v16l4-3.500 3 7 2.500-1-3-7h5z" fill="#fff" stroke="#000"/></svg>
</article>
<aside class="runner">
<div class="rc"><span class="lg"><svg><use href="#tc"/></svg></span><button aria-label="Pause"><i></i><i></i></button><button aria-label="Stop"><i class="sq"></i></button></div>
<div class="bubble"><p>Stopping...</p><p class="ln">QA3_Smoke_Tests</p></div>
</aside>
</section>

<section class="second">
<header class="strip">
<div class="ctab"><svg viewBox="0 0 16 16"><rect width="16" height="16" fill="#0a7cc4"/><path d="M6 2Q2 4 2 8t4 6M10 2q4 2 4 6t-4 6M8 5v6M5 8h6" stroke="#fff" stroke-width="1.500" fill="none"/></svg><span>REACH</span><button aria-label="Close tab">×</button></div><i class="newtab"></i>
<i class="ghost g1"></i><i class="ghost g2"></i><i class="ghost g3"></i>
<div class="wbtn"><button aria-label="Minimize"><i class="mn"></i></button><button aria-label="Restore"><i class="rs"></i></button><button class="cl" aria-label="Close">x</button></div>
</header>
<div class="chromebar">
<div class="nav1"><button aria-label="Back"><svg viewBox="0 0 16 16"><path d="M15 8H2M8 2L2 8l6 6" stroke="#505050" stroke-width="2.500" fill="none"/></svg></button><button aria-label="Forward"><svg viewBox="0 0 16 16"><path d="M1 8h13M8 2l6 6-6 6" stroke="#bdbdbd" stroke-width="2.500" fill="none"/></svg></button><button aria-label="Reload"><svg viewBox="0 0 16 16"><path d="M13 10.500A6 6 0 1 1 12 3.500" stroke="#505050" stroke-width="2.500" fill="none"/><path d="M15 0v7H8z" fill="#505050"/></svg></button>
<div class="omni"><svg viewBox="0 0 12 16"><path d="M.5 .5h7l4 4v11H.5zM7.500 .5v4h4" fill="#fff" stroke="#8a8a8a"/></svg><span>testlocation.qa-web03.reachcorp.local<em>/frontend/</em></span><svg class="star" viewBox="0 0 18 18"><path d="M9 1l2.300 5.500 6 .5-4.500 4 1.400 6L9 13.800 3.800 17l1.400-6L.7 7l6-.5z" fill="#fff" stroke="#777" stroke-width="1.200"/></svg></div><button class="burger" aria-label="Menu"><i></i><i></i><i></i></button></div>
<nav class="marks"><a href="#" class="b1"><svg viewBox="0 0 13 13"><path d="M0 1.500h3" stroke="#e8453c" stroke-width="3"/><path d="M5 1.500h3" stroke="#e8453c" stroke-width="3"/><path d="M10 1.500h3" stroke="#f08030" stroke-width="3"/><path d="M0 6.500h3" stroke="#35a854" stroke-width="3"/><path d="M5 6.500h3" stroke="#3a78e8" stroke-width="3"/><path d="M10 6.500h3M5 11.500h3M10 11.500h3" stroke="#f8b818" stroke-width="3"/><path d="M0 11.500h3" stroke="#35a854" stroke-width="3"/></svg>Apps</a>
<a href="#" class="b2"><svg viewBox="0 0 16 16"><path d="M5 0h6v8H5v2H0V5h7V4H5zM11 16H5V12h6V8h-4V6h9v5h-5z" fill="#1287b5"/></svg>admin_tool</a>
<a href="#" class="b3"><svg viewBox="0 0 16 16"><rect width="16" height="16" fill="#e04a3c"/><path d="M2 2q2 10 8 12M5 2q0 8 7 11M9 2q-1 6 4 6" stroke="#fff" fill="none"/></svg>Rally</a>
<a href="#" class="b4"><svg viewBox="0 0 16 16"><path d="M8 5q4-2.500 6 .5-3 2.500.5 6-2.500 5-6 3-4 2-6-4.500Q2 3.500 8 5zM8 4q0-3 3-4 0 3-3 4z" fill="#555"/></svg>Apple</a>
<a href="#" class="b5"><svg viewBox="0 0 16 16"><use href="#ypf"/></svg>Test URLs</a>
<a href="#" class="other"><svg viewBox="0 0 16 16"><use href="#ypf"/></svg>Other bookmarks</a></nav>
</div>
<main class="page">
<div class="banner"><span>Test Location (QA-Web03)</span></div>
<div class="brand"><div class="logo"><svg><use href="#reach"/></svg><div><strong>REACH</strong><sup>™</sup><small>INTERACTIVE CLINICAL ACCESS</small></div></div><p>Support: 855.894.1500</p></div>
<form class="login">
<div class="row"><label for="uid">User ID</label><input id="uid" type="text" class="focus" autofocus></div>
<div class="row"><label for="pw">Password</label><input id="pw" type="password"></div>
<button type="button" class="go">Log In</button>
<div class="lk"><a href="#">Change your password</a></div>
<button type="button" class="mode">Enter Test Mode</button>
</form>
<i class="mark"></i>
</main>
<footer class="task">
<button class="start" aria-label="Start"><svg viewBox="0 0 38 38"><circle cx="19" cy="19" r="18" fill="url(#gorb)" stroke="#8fb4d8"/><path d="M9 12q5-3 9-1l-2 8q-4-2-9 1z" fill="#e8582a"/><path d="M20 11q5 2 10-1l-2 8q-5 3-10 1z" fill="#86c440"/><path d="M7 21q5-3 9-1l-2 8q-4-2-9 1z" fill="#3f9fe8"/><path d="M17 21q5 2 10-1l-2 8q-5 3-10 1z" fill="#fbc930"/></svg></button>
<button class="tb" aria-label="Internet Explorer"><svg viewBox="0 0 32 32"><path d="M27 18H11q1 6 6 6 4 0 5-3h6q-2 8-11 8-12 0-12-12T17 5q10 0 10 13zM21 14q0-5-5-5t-5 5z" fill="#5cc4f2"/><path d="M4 30Q-1 22 10 11T28 3q3 2-1 7 2-5-2-5Q18 5 9 15T4 30z" fill="#f5c51c"/></svg></button>
<button class="tb open" aria-label="Windows Explorer"><svg viewBox="0 0 32 32"><path d="M2 5h9l2 2h16v21H2z" fill="#f3d888" stroke="#b8953f"/><path d="M5 3h8M14 6h12" stroke="#3aa0d8" stroke-width="2"/><path d="M8 28v-8q0-3 4-3h12q4 0 4 3v8h-5v-6H13v6z" fill="#8fd0f0" stroke="#4a98c8"/></svg></button>
<button class="tb open lit" aria-label="Chrome"><svg><use href="#chrome"/></svg></button>
<button class="tb open" aria-label="Outlook"><svg viewBox="0 0 32 32"><rect x="2" y="1" width="28" height="30" rx="2" fill="#f7b21c"/><rect x="4" y="4" width="20" height="24" fill="#fff3d0"/><circle cx="11" cy="14" r="6" fill="none" stroke="#e08a10" stroke-width="5"/><circle cx="25" cy="13" r="6" fill="#f8efe0" stroke="#d89020"/><path d="M25 9v4h3" stroke="#555" fill="none"/><path d="M14 22h16v8H14l8-4z" fill="#fff" stroke="#d8a040"/></svg></button>
<button class="tb" aria-label="Snipping Tool"><svg viewBox="0 0 32 32"><ellipse cx="15" cy="15" rx="12" ry="8" fill="#98a4d8"/><ellipse cx="17" cy="9" rx="12" ry="8" fill="#fff" stroke="#d8343c" stroke-width="2"/><path d="M10 5l13 16M20 4l-2 18" stroke="#a0a8b8" stroke-width="2"/><circle cx="19" cy="26" r="3.500" fill="none" stroke="#2a88c8" stroke-width="2"/><circle cx="26" cy="23" r="3.500" fill="none" stroke="#2a88c8" stroke-width="2"/></svg></button>
<button class="tb open" aria-label="Remote client"><svg viewBox="0 0 32 32"><circle cx="16" cy="16" r="14" fill="#e6efee"/><path d="M4 18Q8 6 18 12q6 4 2 9t-8 0" stroke="#3a9a58" stroke-width="4" fill="none"/><path d="M20 12q6 2 6 12" stroke="#1a68a0" stroke-width="5" fill="none"/></svg></button>
<button class="tb open" aria-label="TestComplete"><svg><use href="#tc"/></svg></button>
<div class="tray">
<svg viewBox="0 0 16 16"><path d="M1 7l6-5 8 2v7l-5 4-9-4z" fill="#ddd" stroke="#333"/><path d="M1 13l8-4" stroke="#30c040" stroke-width="2"/><path d="M1 15l8-4" stroke="#e03030" stroke-width="2"/></svg>
<svg viewBox="0 0 16 16"><rect width="16" height="16" rx="3" fill="#3d6ee0"/><path d="M4 11.500q-2-3 1-4 1-4 5-2 3 0 3 3 1 3-1 3z" fill="none" stroke="#fff"/></svg>
<svg viewBox="0 0 16 16"><path d="M0 1h16q0 10-8 14Q0 11 0 1z" fill="#b4aea6"/><path d="M3 3l5 9 5-9" stroke="#fff" stroke-width="2.500" fill="none"/></svg>
<svg viewBox="0 0 16 16"><rect x="3" y="1" width="12" height="14" fill="#9cd0f0"/><path d="M2 8l3-4 3 1-1 4zM7 10l4-5 3 1-3 5z" fill="#e89038"/><path d="M1 12q8 4 14-9" stroke="#e8a030" stroke-width="2" fill="none"/></svg>
<svg viewBox="0 0 16 16"><rect width="16" height="16" fill="#f5a818"/><rect x="2" y="2" width="12" height="12" fill="none" stroke="#fff"/><ellipse cx="8" cy="8" rx="2.500" ry="4" fill="none" stroke="#fff" stroke-width="2.500"/></svg>
<svg viewBox="0 0 16 16"><circle cx="8" cy="8" r="7.500" fill="#dde8ea"/><path d="M2 10q2-7 8-3 3 3 0 5" stroke="#4a9a68" stroke-width="2" fill="none"/><path d="M9 6q5 1 5 6" stroke="#1a68a0" stroke-width="3" fill="none"/></svg>
<svg viewBox="0 0 16 16"><path d="M1 2h14v9H9l-3 4v-4H1z" fill="#eee"/><path d="M2 10V3l6 5 6-5v7" stroke="#d83030" stroke-width="2" fill="none"/></svg>
<svg viewBox="0 0 16 16"><circle cx="8" cy="8" r="7.500" fill="#dcd8c8"/><path d="M3 11q-2-6 3-8M13 5q2 6-3 8" stroke="#2a9a48" stroke-width="2" fill="none"/><path d="M6 6h4v5H6zM6 8.500h4" stroke="#777" fill="none"/></svg>
<svg viewBox="0 0 16 16"><rect x="1.500" y="3.500" width="6" height="11" fill="none" stroke="#fff" stroke-width="1.500"/><path d="M9 1v4M13 1v4M7 6h8v3l-3 2H10L7 9zM11 11v4" stroke="#fff" stroke-width="1.500" fill="none"/></svg>
<svg viewBox="0 0 16 16"><path d="M1 13v-2M4 13V10M7.500 13V8M11 13V6M14.500 13V4" stroke="#fff" stroke-width="2"/></svg>
<svg viewBox="0 0 16 16"><path d="M1 6h3l4-4v12L4 10H1z" fill="#fff"/><circle cx="11" cy="11" r="4" fill="#fff" stroke="#e02828" stroke-width="2"/><path d="M8.500 8.500l5 5" stroke="#e02828" stroke-width="2"/></svg>
</div>
<div class="clock"><span>4:25 PM</span><span>11/14/2013</span></div>
<button class="peek" aria-label="Show desktop"></button>
</footer>
</section>
</div>
</body>
</html>
```
FILE: styles.css
```css
* { box-sizing: border-box; }
body { margin: 0; font: 11px/13px "Liberation Sans", Arial, sans-serif; color: #000; }
button { font: inherit; color: inherit; margin: 0; padding: 0; border: 0; background: none; }
h2, h3, p, ul { margin: 0; padding: 0; font-weight: normal; font-size: inherit; }
ul { list-style: none; }
.defs { position: absolute; width: 0; height: 0; overflow: hidden; }
.i { width: 16px; height: 16px; flex: none; }
.screens { display: flex; height: 100vh; min-height: 720px; overflow: hidden; }
.desk, .second { flex: 1 1 0; min-width: 0; position: relative; overflow: hidden; }

/* Wallpaper */
.desk { background:
  radial-gradient(ellipse 900px 340px at 88% 0, #4d98f6 0, #2a72ec 40%, rgba(20,90,216,0) 100%),
  linear-gradient(#0a48c4 0, #0644c0 15%, #0136ad 38%, #0037b4 60%, #0048c6 85%, #0040bc 100%); }

/* TestComplete window */
.tcwin { position: absolute; top: -11px; left: 198px; right: 202px; bottom: 3px; display: flex; flex-direction: column; padding: 0 6px 5px; border: 1px solid #0b1f4c; border-radius: 6px; background: linear-gradient(90deg, #2a60c0, #2c62c4 60%, #4a86dc) top / 100% 120px no-repeat, #1a4aae; box-shadow: inset 0 0 0 1px #6f9be0, 0 0 8px #001a60; }
.title { height: 27px; flex: none; display: flex; align-items: center; gap: 1px; font: 12px/16px "Open Sans", sans-serif; }
.title > span:first-of-type { text-shadow: 0 0 6px #b8d0f4; white-space: nowrap; }
.caps { margin-left: auto; display: flex; height: 20px; align-self: flex-start; }
.caps button { width: 28px; border: 1px solid #1c3c78; background: #8caee0; }
.caps .red { width: 46px; background: #b85848; }
.client { flex: 1; min-height: 0; display: flex; flex-direction: column; background: #f0f0f0; border-top: 1px solid #16316e; }
.bar { display: flex; align-items: center; flex: none; background: linear-gradient(#fbfcfe 0, #e8ecf8 48%, #d2d8ec 52%, #dfe4f5 100%); border-bottom: 1px solid #a9b4d2; }
.grip { width: 3px; height: 20px; flex: none; background: repeating-linear-gradient(#a8acb8 0 2px, transparent 2px 4px); }
.grip.wide { margin-right: 12px; }
.sep { width: 1px; height: 20px; flex: none; background: #8288a0; }
.dd { width: 0; height: 0; flex: none; border: 3px solid transparent; border-top-color: #000; border-bottom: 0; }
.dd.gray { border-top-color: #777; }
.dd.low { align-self: flex-end; margin-bottom: 5px; }
.menu { height: 25px; padding-left: 2px; gap: 12px; }
.tools { height: 27px; padding-left: 2px; gap: 7px; }
.stop { width: 12px; height: 12px; background: #0f6bd8; }
.pressed { width: 24px; height: 22px; padding: 2px 3px; border: 1px solid #4a5674; border-radius: 3px; background: #c4cce4; }
.tabs { display: flex; flex: none; }
.tabs button { display: flex; align-items: center; justify-content: center; border: 1px solid #868a96; background: linear-gradient(#f4f4f4, #d2d2d4); white-space: nowrap; }
.tabs .on { background: #fff; }
.tabs .off { color: #9a9a9a; }
.top { height: 22px; align-items: flex-end; border-bottom: 1px solid #868a96; }
.top button { height: 17px; border-bottom: 0; }
.top .on { height: 19px; margin-bottom: -1px; }
.w102 { width: 102px; } .w82 { width: 82px; } .w88 { width: 90px; } .w78 { width: 76px; } .w136 { width: 137px; } .w152 { width: 151px; } .w232 { width: 233px; } .w132 { width: 133px; } .w160 { width: 160px; } .w178 { width: 177px; } .w76 { width: 77px; } .w84 { width: 84px; } .w72 { width: 72px; } .w83 { width: 83px; } .w55 { width: 55px; } .w38 { width: 38px; } .w61 { width: 62px; } .w64 { width: 64px; } .w68 { width: 68px; } .w130 { width: 131px; } .w42 { width: 44px; } .w53 { width: 53px; } .w33 { width: 34px; }
.work { flex: 1; min-height: 0; display: flex; gap: 6px; padding: 3px 0 5px 3px; margin-right: 3px; background: #fff; border-right: 1px solid #868a96; border-bottom: 1px solid #868a96; }
.left { width: 218px; flex: none; display: flex; flex-direction: column; }
.pane { border: 1px solid #868a96; padding: 2px; display: flex; flex-direction: column; background: #fff; min-height: 0; }
.explorer { flex: 1; }
.cap { display: flex; align-items: center; gap: 5px; height: 22px; flex: none; padding: 0 5px 0 4px; background: linear-gradient(#bccbdc, #d3e1f0); color: #44505e; }
.cap > span { flex: 1; }
.cap.main { background: linear-gradient(#97b5d4, #b6cfe8); color: #000; height: 22px; margin: 0 1px 0 -1px; }
.cb { width: 24px; height: 14px; border: 1px solid #6f7f9c; border-radius: 2px; background: linear-gradient(#e6eef8, #bccbe0); color: #333; font-weight: bold; line-height: 11px; }
.cb.blue { background: linear-gradient(#9ad4f0 45%, #2a94d0 55%); border-color: #1c5f94; color: #fff; }
.cb.red { background: linear-gradient(#f0a08c 45%, #d8542c 55%); border-color: #8c2414; color: #fff; }
.cb.sky { background: linear-gradient(#bcd0e8, #94b0d4); }
.ptools { height: 28px; gap: 7px; padding-left: 3px; }
.box { border: 1px solid #868a96; background: #fff; min-height: 0; flex: 1; }
.scroller { display: flex; overflow: hidden; }
.tree { flex: 1; min-width: 0; overflow: hidden; white-space: nowrap; }
.tree li { display: flex; align-items: center; height: 19px; }
.tree li .i, .grid div .i { width: 19px; }
.cur { flex: 1; height: 19px; line-height: 17px; border: 1px dotted #000; background: #f0f0f0; }
.tree i, .grid td div > i { position: relative; width: 19px; flex: none; align-self: stretch; }
.v::before, .t::before, .l::before, .m::before { content: ""; position: absolute; left: 9px; top: 0; bottom: 0; border-left: 1px dotted #999; }
.l::before, .m::before { bottom: 50%; }
.m.k::before { bottom: 0; }
.t.f::before { top: 50%; }
.t::after, .l::after { content: ""; position: absolute; left: 9px; right: 0; top: 50%; border-top: 1px dotted #999; }
.m::after { content: ""; position: absolute; left: 5px; top: calc(50% - 4px); width: 9px; height: 9px; border: 1px solid #8c8c8c; background: linear-gradient(#2a4a9c, #2a4a9c) center / 5px 1px no-repeat, #f4f4f4; }
.m.p::after { background: linear-gradient(#2a4a9c, #2a4a9c) center / 5px 1px no-repeat, linear-gradient(#2a4a9c, #2a4a9c) center / 1px 5px no-repeat, #f4f4f4; }
.sb { width: 16px; flex: none; display: flex; flex-direction: column; align-items: center; background: #f0f0f0; }
.up, .down { width: 0; height: 0; border: 4px solid transparent; }
.up { border-bottom-color: #444; border-top: 0; margin: 7px 0; }
.down { border-top-color: #444; border-bottom: 0; margin: auto 0 7px; }
.thumb { width: 14px; border: 1px solid #8c8c90; border-radius: 2px; background: linear-gradient(#777, #777) center / 7px 1px no-repeat, linear-gradient(90deg, #f6f6f6, #dcdcde 50%, #b8b8bc); }
.tall { height: 550px; margin-top: 12px; }
.mid { height: 424px; }
.bot { height: 19px; margin-top: -1px; align-items: flex-start; }
.bot button { height: 17px; border-top: 0; }
.bot .on { height: 19px; }
.first { margin-left: 3px; }
.left .bot { background: #f0f0f0; }
.right { flex: 1; min-width: 0; display: flex; flex-direction: column; background: #fff; }
.right > .bot { background: #f0f0f0; }
.docs { height: 25px; align-items: flex-end; background: #f0f0f0; }
.docs > button { height: 21px; padding: 0 9px 0 5px; gap: 7px; border-bottom: 0; }
.docs > .on { height: 23px; }
.docs > button span { flex: 1; text-align: left; }
.docs s { text-decoration: none; color: #8a8a8a; font-weight: bold; }
.nav { margin: 0 4px 0 auto; display: flex; align-self: center; gap: 1px; }
.nav button { width: 16px; height: 16px; color: #4a5a94; font-size: 10px; }
.nav .last { border-color: #444; color: #000; }
.docbox { flex: 1; min-height: 0; display: flex; flex-direction: column; border: 1px solid #868a96; padding: 2px; background: #fff; margin-right: 4px; }
.editor { flex: 1; min-height: 0; display: flex; gap: 5px; border: 1px solid #868a96; border-bottom: 0; padding: 2px; background: #f0f0f0; margin-right: 2px; }
.ops { width: 210px; flex: none; display: flex; flex-direction: column; }
.search { display: flex; align-items: center; height: 20px; margin: 2px 0 4px; border: 1px solid #b4b8c4; background: #fff; }
.search input { flex: 1; min-width: 0; border: 0; padding: 0 2px; font: italic 11px/13px "Liberation Sans", Arial, sans-serif; outline: 0; background: none; }
.search input::placeholder { color: #333; }
.search button { width: 15px; height: 17px; border: 1px solid #999; border-radius: 2px; margin: 0 1px 0 2px; padding: 0 0 0 3px; display: flex; align-items: center; }
.oplist { display: flex; flex-direction: column; padding: 1px 2px; }
.cat { height: 17px; flex: none; text-align: left; padding-left: 5px; background: linear-gradient(#fff 40%, #f0f0f0 45%); border-bottom: 1px solid #ccc; }
.oplist ul { flex: 1; }
.oplist li { display: flex; align-items: center; gap: 5px; height: 23px; padding-left: 3px; }
.steps { flex: 1; min-width: 0; display: flex; flex-direction: column; }
.stools { height: 27px; gap: 7px; padding-left: 3px; margin-bottom: 5px; color: #707070; }
.stools button { display: flex; align-items: center; gap: 4px; }
.r180 { transform: rotate(180deg); } .r270 { transform: rotate(270deg); } .r90 { transform: rotate(90deg); }
.stools .i + .i { margin-left: 2px; }
.clip { flex: 1; min-width: 0; overflow: hidden; }
.grid { width: 100%; table-layout: fixed; border-collapse: separate; border-spacing: 0; }
.c0 { width: 25px; } .c1 { width: 275px; } .c2 { width: 241px; }
th { text-align: left; font-weight: normal; height: 18px; padding: 0 3px; background: linear-gradient(#fff 45%, #f2f3f5 50%); border-right: 1px solid #dedfe2; border-bottom: 1px solid #cdced2; }
.grid td { height: 19px; padding: 0 0 0 2px; white-space: nowrap; overflow: hidden; }
.grid .s td { height: 17px; }
.grid td:first-child { background: #f0f0f0; border-right: 1px solid #a0a0a0; border-bottom: 1px solid #a0a0a0; padding: 0 4px; line-height: 0; }
.grid td:nth-child(2) { padding: 0; }
.grid td div { display: flex; align-items: center; height: 19px; }
.grid .s td div { height: 17px; }
.grid div .i { margin-right: 1px; }
.grid .sel td:first-child { padding: 0; white-space: nowrap; }
.arrow { width: 8px; height: 16px; }
.grid .sel td:nth-child(n+3) { background: #3399ff; color: #fff; border: 1px dotted #c07028; border-width: 1px 0; }
.sel td span { flex: 1; height: 19px; line-height: 17px; background: #00f; color: #fff; border: 1px dotted #ff0; border-right: 0; }
.in { background: #f0f0f0; height: 30px; margin-top: 1px; border-top: 1px solid #868a96; }
.in button { gap: 5px; height: 19px; }
.in .on { height: 21px; }
.vis { height: 22px; }
.watch { height: 163px; flex: none; margin: 6px 4px 0 0; }
.wt { width: 100%; border-spacing: 0; table-layout: fixed; }
.wt th { padding: 0 2px; }
.wt th:nth-child(1) { width: 502px; } .wt th:nth-child(2) { width: 530px; }
.foot { height: 24px; background: #fff; align-items: flex-end; border-bottom: 1px solid #868a96; }
.foot button { height: 18px; border-bottom: 0; }
.status { height: 20px; flex: none; display: flex; background: #f0eceb; color: #9a9a9a; }
.status > span { border-right: 1px solid #d6d2d0; display: flex; align-items: center; }
.keys { width: 98px; gap: 8px; padding-left: 4px; }
.keys b { font-weight: normal; color: #000; }
.pointer { position: absolute; left: 1064px; top: 517px; width: 13px; height: 21px; }

/* Test runner indicator */
.runner { position: absolute; top: 24px; right: 18px; width: 112px; }
.rc { margin-left: 8px; height: 41px; display: flex; align-items: center; gap: 4px; padding-right: 8px; border: 2px solid #fff; border-radius: 4px; background: #6ea4f8; box-shadow: 0 0 0 1px #777; }
.lg { width: 39px; height: 37px; margin-right: 4px; padding: 2px; background: #ccc8c2; }
.lg svg { width: 34px; height: 32px; }
.rc button { width: 21px; height: 21px; display: flex; align-items: center; justify-content: center; gap: 2px; border: 1px solid #887; border-radius: 4px; background: linear-gradient(#f0ece6, #b8b0a6); }
.rc i { width: 3px; height: 8px; background: #333; } .rc .sq { width: 8px; }
.bubble { margin-top: 3px; height: 43px; padding: 4px 4px; border: 1px solid #777; border-radius: 4px; background: linear-gradient(#fff, #e2e4f6); text-align: right; }
.bubble p { padding: 0 3px 2px; white-space: nowrap; } .bubble .ln { border-top: 1px solid #000; padding-top: 2px; }

/* Browser */
.second { display: flex; flex-direction: column; font-family: "Open Sans", sans-serif; background: #fff; }
.strip { height: 25px; flex: none; position: relative; display: flex; overflow: hidden; background: linear-gradient(90deg, #7484b0 0, #27468a 8%, #27488c 28%, #4a78bc 45%, #6b98d2 75%, #5a86c6 90%, #8cb0e0 100%); border-bottom: 1px solid #4a6698; }
.ctab { width: 188px; margin-left: 8px; height: 24px; margin-top: 1px; display: flex; align-items: center; gap: 5px; padding: 0 3px 0 8px; background: #f6f6f6; border-radius: 6px 6px 0 0; font-size: 12px; }
.ctab svg { width: 16px; height: 16px; } .ctab span { flex: 1; } .ctab button { font: bold 14px/14px "Open Sans", sans-serif; color: #666; margin-right: 4px; }
.newtab { width: 28px; height: 14px; margin: 6px 0 0 9px; border-radius: 3px; background: #a4b6d0; transform: skewX(20deg); }
.ghost { position: absolute; border-radius: 50%; filter: blur(3px); }
.g1 { left: 245px; top: 9px; width: 44px; height: 30px; background: linear-gradient(90deg, #9cc8a0, #e0e8f4); }
.g2 { right: 266px; top: 10px; width: 38px; height: 34px; background: radial-gradient(#fff 20%, #c8544c 50%); }
.g3 { right: 190px; top: 10px; width: 38px; height: 34px; background: radial-gradient(#fff 20%, #c8544c 50%); }
.wbtn { position: absolute; right: 3px; top: 0; height: 18px; display: flex; border: 1px solid #38507c; border-top: 0; border-radius: 0 0 4px 4px; background: linear-gradient(#c4d4e8, #8ca8cc); overflow: hidden; }
.wbtn button { width: 28px; border-right: 1px solid #4a628c; display: flex; align-items: center; justify-content: center; }
.wbtn .cl { width: 46px; border: 0; background: linear-gradient(#d89080, #b83020 50%, #c84838); color: #fff; font: bold 15px/14px "Open Sans", sans-serif; }
.mn { width: 11px; height: 4px; background: #fff; border: 1px solid #555; } .rs { width: 10px; height: 10px; border: 3px solid #fff; outline: 1px solid #555; }
.chromebar { flex: none; height: 60px; background: linear-gradient(#f6f6f6, #dcdcdc); border-bottom: 1px solid #a4a4a4; padding: 3px 8px 0 10px; }
.nav1 { display: flex; align-items: center; gap: 13px; height: 28px; }
.nav1 button { width: 16px; height: 16px; } .nav1 svg { width: 16px; height: 16px; display: block; flex: none; }
.omni { flex: 1; min-width: 0; height: 27px; margin-left: -2px; display: flex; align-items: center; gap: 5px; padding: 0 4px; background: #fff; border: 1px solid #a8a8a8; border-radius: 2px; font-size: 15px; line-height: 20px; }
.omni span { flex: 1; } .omni em { color: #888; font-style: normal; } .nav1 .star { width: 18px; height: 18px; }
.nav1 .burger { width: 13px; display: flex; flex-direction: column; gap: 3px; justify-content: center; } .burger i { height: 3px; border-radius: 1px; background: #505050; }
.marks { display: flex; align-items: center; height: 28px; gap: 12px; margin-left: -2px; font-size: 12px; line-height: 16px; }
.marks a { display: flex; align-items: center; gap: 5px; color: #111; text-decoration: none; white-space: nowrap; }
.marks svg { width: 15px; height: 15px; } .marks .b1 svg { width: 13px; height: 13px; }
.marks .other { margin-left: auto; }
.page { flex: 1; min-height: 0; position: relative; padding-right: 10%; font: 13px/16px "DejaVu Sans", Verdana, sans-serif; }
.banner { text-align: center; padding-top: 1px; height: 21px; }
.banner span { display: inline-block; background: #0580ac; color: #fff; font-weight: bold; font-size: 12px; line-height: 17px; padding: 0 6px; }
.brand { padding-left: 5px; height: 80px; }
.logo { display: flex; gap: 5px; height: 38px; }
.logo svg { width: 31px; height: 30px; flex: none; }
.logo div { position: relative; font-family: Inter, sans-serif; }
.logo strong { display: block; font-size: 30px; line-height: 22px; font-weight: bold; }
.logo sup { position: absolute; left: 107px; top: 0; font-size: 9px; line-height: 9px; }
.logo small { display: block; font: 7px/8px "Liberation Sans", sans-serif; color: #888; white-space: nowrap; }
.brand p { padding: 6px 0 0 2px; }
.login { width: 376px; margin: 0 auto; display: flex; flex-direction: column; align-items: flex-end; }
.row { display: flex; align-items: center; gap: 6px; height: 22px; margin-bottom: 8px; }
.row input { width: 153px; height: 22px; border: 1px solid #aaa; padding: 0 2px; background: #fff; outline: 0; }
.row .focus { border-color: #c8963c; box-shadow: 0 0 0 1px #f5c878; }
.go { width: 54px; height: 20px; margin-top: -2px; border: 1px solid #b4b4b4; border-radius: 3px; background: linear-gradient(#f8f8f8, #c8c8c8); }
.lk { width: 153px; margin-top: 31px; font: 13px/16px "Liberation Sans", Arial, sans-serif; } .lk a { color: #00e; }
.mode { width: 160px; height: 40px; margin: 88px 1px 0 0; border: 1px solid #5028d0; border-radius: 3px; background: #a030d8; color: #fff; font-size: 18px; line-height: 20px; text-shadow: 1px 1px 2px #222; white-space: nowrap; }
.mark { position: absolute; right: 0; bottom: 0; width: 30px; height: 10px; background: #ff0; }

/* Taskbar */
.task { height: 41px; flex: none; display: flex; align-items: center; gap: 4px; padding-left: 9px; background: linear-gradient(90deg, #1c3a72 0, #214088 30%, #2a52a0 70%, #2c5098 77%, #20407c 81%, #1c3668 100%); border-top: 2px solid #000; box-shadow: inset 0 1px #6c88b8; }
.task button svg { width: 30px; height: 30px; display: block; margin: 0 auto; }
.start { width: 38px; margin-right: 8px; } .task .start svg { width: 38px; height: 38px; }
.tb { width: 58px; height: 39px; border-radius: 3px; }
.open { border: 1px solid #a8b8d8; background: linear-gradient(150deg, #8498c4 0, #4a62a0 40%, #34539c 70%); }
.lit { background: linear-gradient(150deg, #d0d8ec 0, #8c9cc8 50%, #7890c4 100%); }
.tray { margin-left: auto; display: flex; gap: 8px; } .tray svg { width: 16px; height: 16px; }
.clock { width: 74px; padding-left: 2px; display: flex; flex-direction: column; text-align: center; color: #fff; font-size: 12px; line-height: 17px; }
.peek { width: 14px; height: 39px; border: 1px solid #7c94bc; background: linear-gradient(#6478a4, #1c3568 50%); }
```
